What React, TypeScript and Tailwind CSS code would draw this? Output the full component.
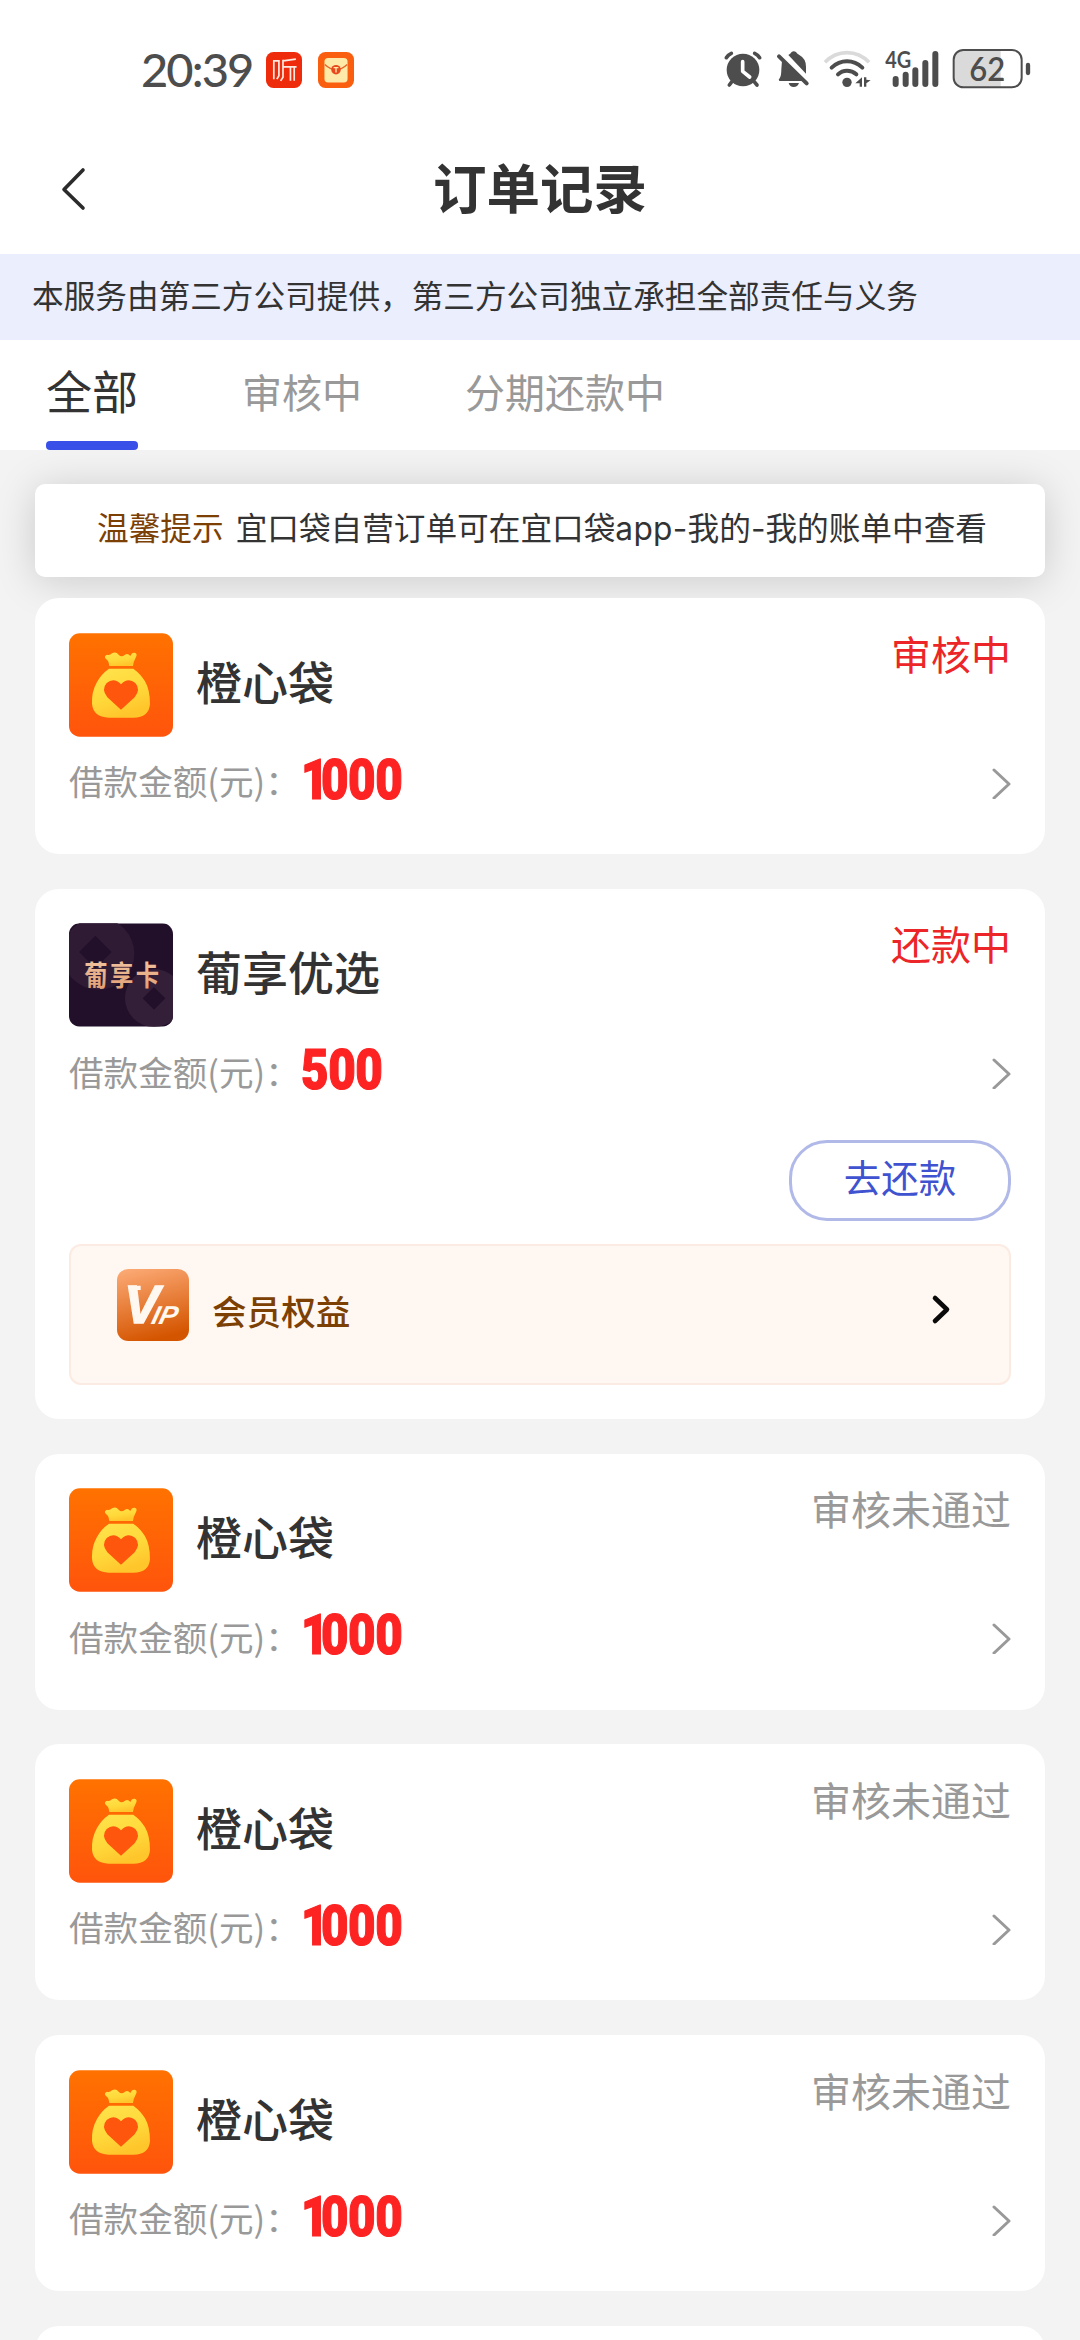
import React from "react";

function AlarmIcon() {
  return (
    <svg className="h-[40px] w-[40px]" viewBox="67 57 120 120" fill="none">
      <circle cx="127" cy="120" r="49" fill="#4d4d4d" />
      <g stroke="#4d4d4d" strokeWidth="11" strokeLinecap="round">
        <path d="M77 83 Q83 74 92 70M177 83Q171 74 162 70" />
        <path d="M96 152L86 165M158 152L169 165" />
      </g>
      <path d="M126 95v29l21 17" stroke="#fff" strokeWidth="11" strokeLinecap="round" strokeLinejoin="round" />
    </svg>
  );
}

function MutedBellIcon() {
  return (
    <svg className="h-[40px] w-[36px]" viewBox="224 57 108 120" fill="none">
      <path d="M264 75Q270 72 274 66Q280 62 287 66Q289 71 297 75Q317 86 317 110V131Z" fill="#4d4d4d" />
      <path d="M245 92L310 153H237Q233 149 238 145Q243 138 243 118Z" fill="#4d4d4d" />
      <path d="M265 159H296Q292 171 280 171Q268 171 265 159Z" fill="#4d4d4d" />
      <path d="M236 79L319 160" stroke="#4d4d4d" strokeWidth="12" strokeLinecap="round" />
      <path d="M244 70L328 151" stroke="#fff" strokeWidth="7" />
    </svg>
  );
}

function WifiIcon() {
  return (
    <svg className="h-[40px] w-[48px]" viewBox="368 57 144 120" fill="none">
      <path d="M374 97Q402 68 440 68T506 97" stroke="#dadada" strokeWidth="11" />
      <path d="M394 113Q414 94 440 94T486 113M413 133Q424 122 440 122T468 133" stroke="#4d4d4d" strokeWidth="12" strokeLinecap="round" />
      <circle cx="440" cy="157" r="14" fill="#4d4d4d" />
      <path d="M485 142V170H478V160H465ZM491 142V170H498V160L511 151L498 149V142Z" fill="#4d4d4d" />
    </svg>
  );
}

function SignalIcon() {
  return (
    <svg className="h-[48px] w-[56px]" viewBox="550 33 168 144" fill="none">
      <text x="554" y="115" fontFamily="Lato, sans-serif" fontWeight="700" fontSize="70" textLength="78" lengthAdjust="spacingAndGlyphs" fill="#4d4d4d">4G</text>
      <g stroke="#4d4d4d" strokeWidth="18" strokeLinecap="round">
        <path d="M585 147V162M615 134V162M644 121V162M674 99V162M704 72V162" />
      </g>
    </svg>
  );
}

function BatteryIcon() {
  return (
    <svg className="h-[40px] w-[80px]" viewBox="754 57 240 120" fill="none">
      <path d="M788 61H900V171H788Q760 171 760 143V89Q760 61 788 61Z" fill="#dadada" />
      <rect x="759" y="60" width="204" height="112" rx="29" stroke="#4d4d4d" strokeWidth="6" />
      <path d="M982 105V129" stroke="#4d4d4d" strokeWidth="13" strokeLinecap="round" />
      <text x="806" y="152" fontFamily="Lato, sans-serif" fontWeight="600" fontSize="98" textLength="108" lengthAdjust="spacingAndGlyphs" fill="#4d4d4d">62</text>
    </svg>
  );
}

function ListenAppIcon() {
  return (
    <svg className="h-[36px] w-[36px]" viewBox="436 66 106 106" fill="none">
      <rect x="436" y="66" width="106" height="106" rx="22" fill="#ee2c0c" />
      <path d="M459 146V92H474V136L468 146M486 89V140L479 151M486 92L524 87M488 110H526M508 110V151M519 110V151" stroke="#ffe9df" strokeWidth="5" />
    </svg>
  );
}

function EnvelopeAppIcon() {
  return (
    <svg className="h-[36px] w-[36px]" viewBox="592 66 106 106" fill="none">
      <rect x="592" y="66" width="106" height="106" rx="22" fill="#fa5f10" />
      <rect x="611" y="84" width="68" height="72" rx="11" fill="#ffe9a8" />
      <path d="M612 103Q628 118 645 118T678 103" stroke="#e8622a" strokeWidth="4" />
      <circle cx="645" cy="118" r="14" fill="#e8481c" />
      <path d="M638 112H652M645 112V126" stroke="#ffe9a8" strokeWidth="4" />
    </svg>
  );
}

function PouchLogo() {
  return (
    <svg className="h-[104px] w-[104px] shrink-0" viewBox="117 128 312 310">
      <defs>
        <linearGradient id="pouchBg" x1="0" y1="0" x2="0" y2="1">
          <stop offset="0" stopColor="#ff7200" />
          <stop offset="1" stopColor="#ff540c" />
        </linearGradient>
        <linearGradient id="pouchBody" x1="0" y1="0" x2="0.4" y2="1">
          <stop offset="0" stopColor="#ffe34d" />
          <stop offset="0.6" stopColor="#ffd93a" />
          <stop offset="1" stopColor="#ffc62c" />
        </linearGradient>
      </defs>
      <rect x="117" y="128" width="312" height="310" rx="32" fill="url(#pouchBg)" />
      <path d="M238 226L236 216Q235 211 226 203Q222 196 231 192Q239 195 246 188Q258 182 266 192Q274 201 284 193Q293 186 301 196Q305 185 314 186Q322 188 319 197Q310 214 309 226Z" fill="url(#pouchBody)" />
      <path d="M237 234H310Q332 250 345 272Q360 298 360 340Q357 381 310 381H236Q190 379 186 340Q184 304 201 274Q214 250 237 234Z" fill="url(#pouchBody)" />
      <path d="M273 357L232 320Q213 296 230 277Q252 258 273 281Q294 258 316 277Q333 296 314 320Z" fill="#ff560e" />
    </svg>
  );
}

function GrapeCardLogo() {
  return (
    <svg className="h-[104px] w-[104px] shrink-0" viewBox="117 131 312 310">
      <defs>
        <clipPath id="grapeClip">
          <rect x="117" y="131" width="312" height="310" rx="32" />
        </clipPath>
        <linearGradient id="grapeInk" x1="0" y1="0" x2="0" y2="1">
          <stop offset="0" stopColor="#f3cba8" />
          <stop offset="1" stopColor="#e09a6c" />
        </linearGradient>
      </defs>
      <g clipPath="url(#grapeClip)">
        <rect x="117" y="131" width="312" height="310" fill="#22102a" />
        <circle cx="205" cy="222" r="108" fill="#301b35" />
        <path d="M196 168L245 217L196 266L147 217Z" fill="#22102a" />
        <circle cx="372" cy="355" r="87" fill="#341f38" />
        <path d="M372 322L406 356L372 390L338 356Z" fill="#22102a" />
        <text transform="translate(0 320) scale(1 1.2)" x="163" y="0" fontFamily="'Noto Sans CJK SC', sans-serif" fontWeight="700" fontSize="70" textLength="224" lengthAdjust="spacing" fill="url(#grapeInk)">葡享卡</text>
      </g>
    </svg>
  );
}

function VipLogo() {
  return (
    <svg className="h-[72px] w-[72px]" viewBox="261 147 216 216">
      <defs>
        <linearGradient id="vipBg" x1="0.2" y1="0" x2="0.45" y2="1">
          <stop offset="0" stopColor="#fba873" />
          <stop offset="1" stopColor="#d45500" />
        </linearGradient>
      </defs>
      <rect x="261" y="147" width="216" height="216" rx="34" fill="url(#vipBg)" />
      <g fill="#fff8f0" fontFamily="'Liberation Sans', sans-serif" fontWeight="700" fontStyle="italic">
        <text x="282" y="309" fontSize="160" stroke="#fff8f0" strokeWidth="4">V</text>
        <text transform="translate(361 311) skewX(-14)" fontSize="78" textLength="76" lengthAdjust="spacingAndGlyphs">IP</text>
      </g>
      <path d="M296 197H332V210H302Z" fill="#fff8f0" />
    </svg>
  );
}

function StatusBar() {
  return (
    <div className="flex h-[140px] items-start pl-[141px] pr-[48px] pt-[49px] text-[#4d4d4d]">
      <div className="-mt-[1px] flex h-[42px] w-[125px] items-center whitespace-nowrap font-[Lato] text-[47px] font-medium leading-[42px] tracking-[-1.9px]">20:39</div>
      <div className="mt-[3px] flex gap-[16px]">
        <ListenAppIcon />
        <EnvelopeAppIcon />
      </div>
      <div className="ml-auto flex items-start">
        <AlarmIcon />
        <span className="ml-[12px] flex"><MutedBellIcon /></span>
        <span className="ml-[12px] flex"><WifiIcon /></span>
        <span className="-mt-[8px] ml-[13px] flex"><SignalIcon /></span>
        <span className="ml-[12px] flex"><BatteryIcon /></span>
      </div>
    </div>
  );
}

type Order = {
  name: string;
  amount: string;
  status: string;
  active: boolean;
  grape?: boolean;
};

const orders: Order[] = [
  { name: "橙心袋", amount: "1000", status: "审核中", active: true },
  { name: "葡享优选", amount: "500", status: "还款中", active: true, grape: true },
  { name: "橙心袋", amount: "1000", status: "审核未通过", active: false },
  { name: "橙心袋", amount: "1000", status: "审核未通过", active: false },
  { name: "橙心袋", amount: "1000", status: "审核未通过", active: false },
];

function OrderCard({ order }: { order: Order }) {
  return (
    <section className={"relative shrink-0 rounded-[24px] bg-white px-[34px] pt-[34.5px] " + (order.grape ? "h-[530px]" : "h-[256px]")}>
      <div className="flex h-[104px] items-start">
        {order.grape ? <GrapeCardLogo /> : <PouchLogo />}
        <h2 className="ml-[23px] mt-[12px] text-[46px] font-medium leading-[70px] text-[#333]">{order.name}</h2>
        <span className={"ml-auto text-[40px] leading-[40px] " + (order.active ? "text-[#ec2529]" : "text-[#999]")}>{order.status}</span>
      </div>
      <div className="flex h-[92px] items-center text-[#999]">
        <span className="mb-[5px] text-[34.6px] leading-[50px]">借款金额(元)：</span>
        <span
          className={
            "mb-[6px] ml-[1px] inline-block origin-left scale-x-[0.85] font-[Roboto] text-[56px] font-black leading-[60px] tracking-[-0.5px] text-[#fd2323] [-webkit-text-stroke:1.2px_#fd2323] " +
            (order.amount.startsWith("1") ? "first-letter:tracking-[-9px]" : "")
          }
        >
          {order.amount}
        </span>
        <svg className="ml-auto h-[32px] w-[20px]" viewBox="0 0 20 32" fill="none" stroke="#999" strokeWidth="3" strokeLinecap="round" strokeLinejoin="round">
          <path d="M3 3L18 17L3 31" />
        </svg>
      </div>
      {order.grape && (
        <>
          <div className="mt-[20.500px] flex justify-end">
            <button className="h-[81px] w-[222px] rounded-[38px] border-[3px] border-[#b1b9e8] pb-[8px] text-[37.5px] leading-[60px] text-[#3f53d0]">去还款</button>
          </div>
          <div className="mt-[23px] flex h-[141px] items-start rounded-[12px] border-2 border-[#fbebe2] bg-[#fff7f1] pl-[46px] pr-[57px] pt-[23px]">
            <VipLogo />
            <span className="ml-[23px] mt-[10px] text-[34.6px] font-medium leading-[62px] text-[#7c3f04]">会员权益</span>
            <svg className="ml-auto mt-[23px] h-[34px] w-[22px]" viewBox="0 0 22 34" fill="none" stroke="#0a0a0a" strokeWidth="4.6" strokeLinecap="round" strokeLinejoin="round">
              <path d="M5 6L17 17.500L5 29" />
            </svg>
          </div>
        </>
      )}
    </section>
  );
}

export default function App() {
  return (
    <div className="flex h-[2340px] w-[1080px] flex-col overflow-hidden bg-[#f3f3f3] font-['Noto_Sans_CJK_SC',sans-serif]">
      <header className="relative z-10 shrink-0 bg-white">
        <StatusBar />
        <div className="grid h-[114px] grid-cols-[120px_1fr_120px] items-start">
          <svg className="ml-[58px] mt-[26px] h-[48px] w-[32px]" viewBox="0 0 32 48" fill="none" stroke="#2b2b2b" strokeWidth="3.6" strokeLinecap="round" strokeLinejoin="round">
            <path d="M25 4L6 23.500L25 42" />
          </svg>
          <h1 className="mt-[6px] text-center text-[53.5px] font-bold leading-[80px] text-[#333]">订单记录</h1>
        </div>
        <div className="h-[86px] whitespace-nowrap bg-[#ebeefc] pl-[32px] text-[31.65px] leading-[81px] text-[#333]">
          本服务由第三方公司提供，第三方公司独立承担全部责任与义务
        </div>
        <nav className="flex h-[110px] pl-[46px] text-[40px] text-[#999]">
          <div className="flex h-full w-[92px] flex-col justify-between">
            <span className="whitespace-nowrap text-[46px] leading-[98px] text-[#333]">全部</span>
            <span className="h-[9px] rounded-[4px] bg-[#3850e8]" />
          </div>
          <span className="ml-[104px] leading-[102px]">审核中</span>
          <span className="ml-[103px] leading-[102px]">分期还款中</span>
        </nav>
      </header>
      <main className="flex flex-col px-[35px] pt-[34px]">
        <div className="flex h-[93px] shrink-0 justify-center whitespace-nowrap rounded-[10px] bg-white pl-[4px] text-[31.65px] leading-[84px] text-[#333] shadow-[0_4px_40px_rgba(0,0,0,0.17)]">
          <span className="mr-[12px] text-[#7c3f04]">温馨提示</span>
          <span>
            宜口袋自营订单可在宜口袋<span className="font-[Inter] tracking-[0.3px]">app-</span>我的<span className="font-[Inter]">-</span>我的账单中查看
          </span>
        </div>
        <div className="mt-[21px] flex flex-col gap-[34.800px]">
          {orders.map((order, i) => (
            <OrderCard key={i} order={order} />
          ))}
          <section className="relative h-[256px] shrink-0 rounded-[24px] bg-white" />
        </div>
      </main>
    </div>
  );
}
